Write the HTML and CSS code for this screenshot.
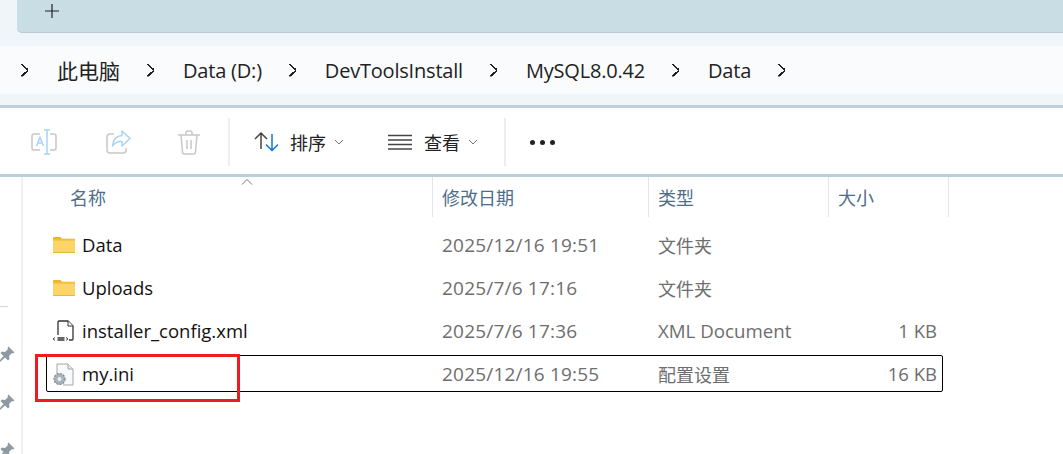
FILE: index.html
```html
<!DOCTYPE html>
<html lang="zh-CN">
<head>
    <meta charset="UTF-8" />
    <meta name="viewport" content="width=device-width, initial-scale=1.0" />
    <title>Data</title>
    <link rel="stylesheet" href="styles.css">
</head>
<body>
    <div class="top-area">
        <div class="tab-band">
            <svg class="plus" width="16" height="16" viewBox="0 0 16 16"><path d="M8 1v14M1 8h14" stroke="#222" stroke-width="1.2" fill="none"/></svg>
        </div>
    </div>

    <nav class="breadcrumb">
        <span class="crumb-sep first"></span><span class="crumb cjk">此电脑</span>
        <span class="crumb-sep"></span><span class="crumb">Data (D:)</span>
        <span class="crumb-sep"></span><span class="crumb">DevToolsInstall</span>
        <span class="crumb-sep"></span><span class="crumb">MySQL8.0.42</span>
        <span class="crumb-sep"></span><span class="crumb">Data</span>
        <span class="crumb-sep"></span>
    </nav>
    <div class="breadcrumb-gap"></div>

    <div class="toolbar">
        <svg class="tool-icon" width="26" height="26" viewBox="0 0 26 26" fill="none">
            <path d="M9 5H3a2 2 0 0 0-2 2v12a2 2 0 0 0 2 2h6M19 5h4a2 2 0 0 1 2 2v12a2 2 0 0 1-2 2h-4" stroke="#c8c8c8" stroke-width="1.5"/>
            <path d="M5.5 17 9 8.500 12.500 17M6.800 14h4.400M16 1v24M13 1h6M13 25h6" stroke="#a9d3f3" stroke-width="1.500"/>
        </svg>
        <svg class="tool-icon share" width="26" height="26" viewBox="0 0 26 26" fill="none">
            <path d="M9 5H5a3 3 0 0 0-3 3v13a3 3 0 0 0 3 3h13a3 3 0 0 0 3-3v-2" stroke="#c8c8c8" stroke-width="1.500"/>
            <path d="M17 2l8 7.500-8 7.500v-4.500c-4-.5-7 1-9.500 4.500C8 11 11 7 17 6.500z" stroke="#a9d3f3" stroke-width="1.500" stroke-linejoin="round"/>
        </svg>
        <svg class="tool-icon trash" width="22" height="25" viewBox="0 0 22 25" fill="none" stroke="#c8c8c8" stroke-width="1.500">
            <path d="M0 5h22M3 5l1.500 17a2 2 0 0 0 2 2h9a2 2 0 0 0 2-2L19 5M8 5V3a2 2 0 0 1 2-2h2a2 2 0 0 1 2 2v2M9 10v9M13 10v9"/>
        </svg>
        <span class="tool-divider first"></span>
        <svg class="tool-icon sort" width="24" height="20" viewBox="0 0 24 20" fill="none" stroke-width="1.500">
            <path d="M1 7l6-6 6 6M7 1v16" stroke="#444"/>
            <path d="M12 12.500l6 6 6-6M18 2v16" stroke="#0f78d4"/>
        </svg>
        <span class="tool-label">排序</span>
        <svg class="tool-chevron" width="10" height="6" viewBox="0 0 10 6" fill="none"><path d="M1 1l4 4 4-4" stroke="#777"/></svg>
        <svg class="tool-icon view" width="24" height="16" viewBox="0 0 24 16" fill="none" stroke="#444" stroke-width="1.300">
            <path d="M0 1.500h24M0 6h24M0 10.500h24M0 15h24"/>
        </svg>
        <span class="tool-label">查看</span>
        <svg class="tool-chevron" width="10" height="6" viewBox="0 0 10 6" fill="none"><path d="M1 1l4 4 4-4" stroke="#777"/></svg>
        <span class="tool-divider second"></span>
        <span class="more"><i></i><i></i><i></i></span>
    </div>

    <div class="content">
        <aside class="sidebar">
            <span class="side-line"></span>
            <svg class="pin" width="18" height="18" viewBox="0 0 18 18"><path d="M10.500 1.500l6 6-1.500 1-1-.5-3 3 .5 3-1.500 1.500-3-3L2 17l-1-1 4.500-5-3-3L4 6.500l3 .5 3-3-.5-1z" fill="#8e9aa1"/></svg>
            <svg class="pin" width="18" height="18" viewBox="0 0 18 18"><path d="M10.500 1.500l6 6-1.500 1-1-.5-3 3 .5 3-1.500 1.500-3-3L2 17l-1-1 4.500-5-3-3L4 6.500l3 .5 3-3-.5-1z" fill="#8e9aa1"/></svg>
            <svg class="pin" width="18" height="18" viewBox="0 0 18 18"><path d="M10.500 1.500l6 6-1.500 1-1-.5-3 3 .5 3-1.500 1.500-3-3L2 17l-1-1 4.500-5-3-3L4 6.500l3 .5 3-3-.5-1z" fill="#8e9aa1"/></svg>
        </aside>

        <main class="file-pane">
            <svg class="sort-caret" width="12" height="6" viewBox="0 0 12 6" fill="none"><path d="M1 5.500l5-5 5 5" stroke="#777"/></svg>
            <div class="list-header">
                <div class="col-head name-head">名称</div>
                <div class="col-head date-head">修改日期</div>
                <div class="col-head type-head">类型</div>
                <div class="col-head size-head">大小</div>
            </div>

            <div class="file-list">
                <div class="file-row">
                    <div class="file-name">
                        <svg class="file-icon folder" width="22" height="17" viewBox="0 0 24 18" preserveAspectRatio="none"><path d="M0 2a1 1 0 0 1 1-1h7l2 2h14v2H0z" fill="#f0b429"/><path d="M0 4h23a1 1 0 0 1 1 1v12a1 1 0 0 1-1 1H1a1 1 0 0 1-1-1z" fill="#fbd568"/><path d="M0 4h24v1H0z" fill="#f5c242"/><path d="M0 17h24v1H0z" fill="#e9b53c"/></svg>
                        <span>Data</span>
                    </div>
                    <div class="file-cell file-date">2025/12/16 19:51</div>
                    <div class="file-cell">文件夹</div>
                    <div class="file-cell file-size"></div>
                </div>
                <div class="file-row">
                    <div class="file-name">
                        <svg class="file-icon folder" width="22" height="17" viewBox="0 0 24 18" preserveAspectRatio="none"><path d="M0 2a1 1 0 0 1 1-1h7l2 2h14v2H0z" fill="#f0b429"/><path d="M0 4h23a1 1 0 0 1 1 1v12a1 1 0 0 1-1 1H1a1 1 0 0 1-1-1z" fill="#fbd568"/><path d="M0 4h24v1H0z" fill="#f5c242"/><path d="M0 17h24v1H0z" fill="#e9b53c"/></svg>
                        <span>Uploads</span>
                    </div>
                    <div class="file-cell file-date">2025/7/6 17:16</div>
                    <div class="file-cell">文件夹</div>
                    <div class="file-cell file-size"></div>
                </div>
                <div class="file-row">
                    <div class="file-name">
                        <svg class="file-icon" width="24" height="22" viewBox="0 0 24 22" fill="none"><path d="M6 15V2a1 1 0 0 1 1-1h9l5 5v13a1 1 0 0 1-1 1h-3" stroke="#333" stroke-width="1.300"/><path d="M16 1v5h5" stroke="#333" fill="#fff"/><path d="M3 17.500 1 19l2 1.500M14 17.500l2 1.500-2 1.500" stroke="#444"/><rect x="5.500" y="17" width="7" height="4" fill="#666"/></svg>
                        <span>installer_config.xml</span>
                    </div>
                    <div class="file-cell file-date">2025/7/6 17:36</div>
                    <div class="file-cell file-latin">XML Document</div>
                    <div class="file-cell file-size">1 KB</div>
                </div>
                <div class="file-row selected">
                    <div class="file-name">
                        <svg class="file-icon" width="24" height="24" viewBox="0 0 24 24" fill="none"><path d="M5 12V2h11l5 5v16H11" fill="#f7f9fb" stroke="#a3a7aa"/><path d="M16 2v5h5" stroke="#a3a7aa" fill="#e6eaee"/><circle cx="7.500" cy="17" r="5.500" fill="#aab3ba" stroke="#7f888f" stroke-width="1.200" stroke-dasharray="2 1.200"/><circle cx="7.500" cy="17" r="2" fill="#eef1f3"/></svg>
                        <span>my.ini</span>
                    </div>
                    <div class="file-cell file-date">2025/12/16 19:55</div>
                    <div class="file-cell">配置设置</div>
                    <div class="file-cell file-size">16 KB</div>
                </div>
            </div>

            <div class="red-mark"></div>
        </main>
    </div>
</body>
</html>
```

FILE: styles.css
```css
* {
    box-sizing: border-box;
}

html, body {
    height: 100%;
}

body {
    margin: 0;
    overflow: hidden;
    background-color: #ffffff;
    font-family: 'Open Sans', 'Noto Sans CJK SC', sans-serif;
    color: #1a1a1a;
}

.top-area {
    height: 46px;
    padding-left: 17px;
    background-color: #eff5f8;
}

.tab-band {
    height: 33px;
    padding: 3px 0 0 27px;
    background-color: #c9dde4;
    border-bottom: 1px solid #b5cad2;
    border-bottom-left-radius: 5px;
}

.plus {
    display: block;
}

.breadcrumb {
    height: 48px;
    display: flex;
    align-items: center;
    padding-left: 21px;
    background-color: #f9fbfd;
    font-size: 20px;
    letter-spacing: -0.2px;
    color: #222222;
}

.crumb {
    margin-left: 29px;
    margin-right: 27px;
}

.crumb.cjk {
    font-size: 21px;
    letter-spacing: 0;
}

.crumb-sep {
    width: 7px;
    height: 13px;
    flex: none;
    background:
        linear-gradient(to top right, transparent 44%, #222 44%, #222 62%, transparent 62%) 0 0 / 100% 50% no-repeat,
        linear-gradient(to bottom right, transparent 44%, #222 44%, #222 62%, transparent 62%) 0 100% / 100% 50% no-repeat;
}

.breadcrumb-gap {
    height: 11px;
    background-color: #eff5f8;
}

.toolbar {
    height: 72px;
    display: flex;
    align-items: center;
    padding-left: 31px;
    padding-top: 2px;
    border-top: 3px solid #bccfd6;
    border-bottom: 3px solid #bccfd6;
}

.tool-icon {
    flex: none;
}

.tool-icon.share {
    margin-left: 48px;
}

.tool-icon.trash {
    margin-left: 47px;
}

.tool-divider {
    width: 2px;
    height: 48px;
    background-color: #eeeeee;
}

.tool-divider.first {
    margin-left: 28px;
}

.tool-divider.second {
    margin-left: 26px;
}

.tool-icon.sort {
    margin-left: 24px;
}

.tool-icon.view {
    margin-left: 44px;
}

.tool-label {
    margin-left: 12px;
    font-size: 18px;
    color: #222222;
}

.tool-chevron {
    margin-left: 8px;
}

.more {
    display: flex;
    gap: 5px;
    margin-left: 24px;
}

.more i {
    width: 5px;
    height: 5px;
    border-radius: 50%;
    background-color: #222222;
}

.content {
    display: flex;
    height: 277px;
}

.sidebar {
    position: relative;
    width: 23px;
    flex: none;
    border-right: 2px solid #f0f0f0;
}

.side-line {
    position: absolute;
    left: 0;
    top: 129px;
    width: 8px;
    height: 1px;
    background-color: #d5d5d5;
}

.pin {
    position: absolute;
    left: -2px;
}

.pin:nth-of-type(1) {
    top: 168px;
}

.pin:nth-of-type(2) {
    top: 216px;
}

.pin:nth-of-type(3) {
    top: 264px;
}

.file-pane {
    position: relative;
    flex: 1;
}

.sort-caret {
    position: absolute;
    left: 218px;
    top: 2px;
}

.list-header {
    height: 40px;
    display: grid;
    grid-template-columns: 410px 216px 180px 120px;
    font-size: 18px;
    color: #4f6d8a;
}

.col-head {
    display: flex;
    align-items: center;
    padding-left: 9px;
    border-right: 1px solid #e5e5e5;
}

.name-head {
    padding-left: 47px;
}

.file-list {
    display: flex;
    flex-direction: column;
    gap: 6px;
    margin: 9px 0 0 23px;
    width: 897px;
}

.file-row {
    height: 37px;
    display: grid;
    grid-template-columns: 395px 216px 180px 99px;
    align-items: center;
    border: 1px solid transparent;
    border-radius: 2px;
}

.file-row.selected {
    border-color: #000000;
}

.file-name {
    display: flex;
    align-items: center;
    padding-left: 5px;
    font-size: 18.5px;
    color: #111111;
}

.file-icon {
    flex: none;
    margin-right: 6px;
}

.file-icon.folder {
    margin-left: 1px;
    margin-right: 7px;
}

.file-cell {
    font-size: 18px;
    color: #6e6e6e;
}

.file-date {
    font-size: 19px;
    letter-spacing: 0.2px;
}

.file-latin {
    font-size: 18.7px;
}

.file-size {
    font-size: 18.5px;
    text-align: right;
}

.red-mark {
    position: absolute;
    left: 12px;
    top: 177px;
    width: 205px;
    height: 48px;
    border: 3px solid #ed1c24;
}
```
